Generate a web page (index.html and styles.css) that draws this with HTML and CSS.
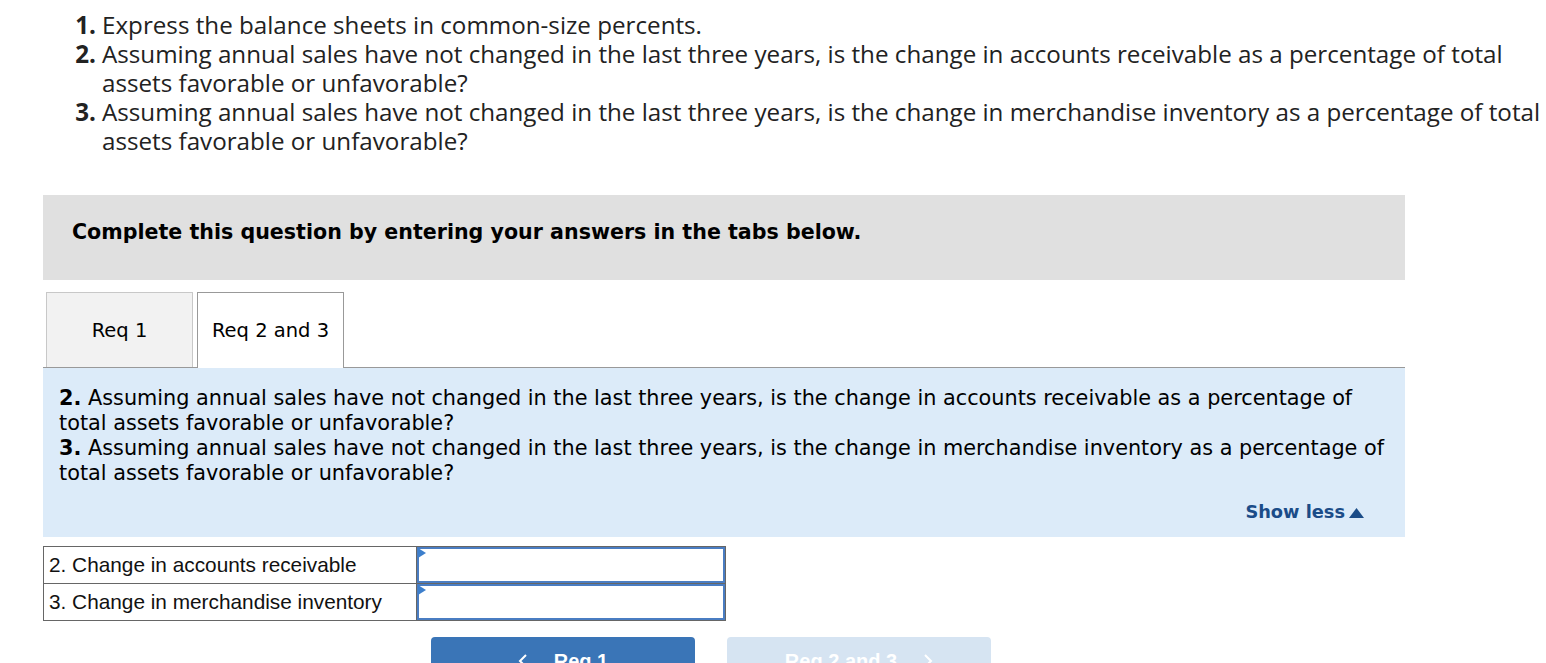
FILE: index.html
```html
<!DOCTYPE html>
<html>
<head>
<meta charset="utf-8">
<link rel="stylesheet" href="styles.css">
</head>
<body>
<div class="page">
  <ol class="reqs">
    <li><span class="num">1.</span><span class="txt">Express the balance sheets in common-size percents.</span></li>
    <li><span class="num">2.</span><span class="txt">Assuming annual sales have not changed in the last three years, is the change in accounts receivable as a percentage of total<br>assets favorable or unfavorable?</span></li>
    <li><span class="num">3.</span><span class="txt">Assuming annual sales have not changed in the last three years, is the change in merchandise inventory as a percentage of total<br>assets favorable or unfavorable?</span></li>
  </ol>

  <div class="instr">Complete this question by entering your answers in the tabs below.</div>

  <div class="tabs">
    <div class="tab">Req 1</div>
    <div class="tab active">Req 2 and 3</div>
  </div>

  <div class="panel">
    <p><b>2.</b> Assuming annual sales have not changed in the last three years, is the change in accounts receivable as a percentage of<br>total assets favorable or unfavorable?<br><b>3.</b> Assuming annual sales have not changed in the last three years, is the change in merchandise inventory as a percentage of<br>total assets favorable or unfavorable?</p>
    <div class="showless"><span>Show less</span><svg class="tri" width="15" height="10" viewBox="0 0 15 10"><polygon points="7.5,0 15,10 0,10" fill="#1b4c88"/></svg></div>
  </div>

  <div class="answers">
    <div class="cell lbl">2. Change in accounts receivable</div>
    <div class="cell inp"><div class="box"><span class="flag"></span></div></div>
    <div class="cell lbl">3. Change in merchandise inventory</div>
    <div class="cell inp"><div class="box"><span class="flag"></span></div></div>
  </div>

  <div class="nav">
    <div class="btn prev"><svg class="chev" width="10" height="16" viewBox="0 0 10 16"><polyline points="8,2 2,8 8,14" fill="none" stroke="#fff" stroke-width="2"/></svg><span>Req 1</span></div>
    <div class="btn next"><span>Req 2 and 3</span><svg class="chev" width="10" height="16" viewBox="0 0 10 16"><polyline points="2,2 8,8 2,14" fill="none" stroke="#fff" stroke-width="2"/></svg></div>
  </div>
</div>
</body>
</html>
```
FILE: styles.css
```css
html, body { margin: 0; padding: 0; background: #fff; }
body { overflow: hidden; }
.page { padding-left: 43px; width: 1362px; }

.reqs {
  list-style: none;
  margin: 10px 0 0 0;
  padding: 0;
  width: 1500px;
  font-family: "Open Sans", "Lato", sans-serif;
  font-size: 24.2px;
  line-height: 29px;
  color: #222;
}
.reqs li { display: flex; gap: 6px; }
.reqs .num { width: 53px; text-align: right; font-weight: 700; flex: none; }
.reqs .txt { flex: 1; white-space: nowrap; }

.instr {
  margin-top: 40px;
  background: #e0e0e0;
  height: 85px;
  box-sizing: border-box;
  padding: 25px 0 0 29px;
  font-family: "DejaVu Sans", Verdana, sans-serif;
  font-weight: 700;
  font-size: 20.6px;
  color: #000;
}

.tabs {
  margin-top: 12px;
  display: flex;
  gap: 4px;
  padding-left: 3px;
  border-bottom: 1px solid #999;
  height: 75px;
}
.tab {
  width: 147px;
  height: 75px;
  box-sizing: border-box;
  border: 1px solid #c8c8c8;
  border-bottom: none;
  background: #f2f2f2;
  display: flex;
  align-items: center;
  justify-content: center;
  font-family: "DejaVu Sans", Verdana, sans-serif;
  font-size: 19.5px;
  color: #000;
}
.tab.active {
  background: #fff;
  border-color: #999;
  height: 76px;
  margin-bottom: -1px;
}

.panel {
  background: #dcebf9;
  padding: 18px 41px 15px 16px;
  font-family: "DejaVu Sans", Verdana, sans-serif;
  font-size: 20.8px;
  line-height: 25px;
  color: #000;
}
.panel p { margin: 0; white-space: nowrap; }
.showless {
  margin-top: 16px;
  display: flex;
  justify-content: flex-end;
  align-items: center;
  gap: 4px;
  font-weight: 700;
  font-size: 17.8px;
  line-height: 20px;
  color: #1b4c88;
}
.showless .tri { display: block; margin-top: 1px; }

.answers {
  margin-top: 9px;
  display: grid;
  grid-template-columns: 373px 309px;
  width: max-content;
  border-top: 1px solid #666;
  border-left: 1px solid #666;
  font-family: "Liberation Sans", Arial, sans-serif;
  font-size: 20.8px;
  color: #111;
}
.cell {
  height: 37px;
  box-sizing: border-box;
  border-right: 1px solid #666;
  border-bottom: 1px solid #666;
}
.lbl { padding-left: 5px; display: flex; align-items: center; }
.box {
  height: 36px;
  border: 2px solid #4a7dc2;
  box-sizing: border-box;
  position: relative;
}
.flag {
  position: absolute;
  left: -1px;
  top: -1px;
  width: 0; height: 0;
  border-top: 5px solid transparent;
  border-bottom: 5px solid transparent;
  border-left: 8px solid #3d7fcc;
}

.nav {
  margin-top: 16px;
  margin-left: 388px;
  display: flex;
  gap: 32px;
}
.btn {
  width: 264px;
  height: 44px;
  border-radius: 4px;
  font-family: "Liberation Sans", Arial, sans-serif;
  font-weight: 700;
  font-size: 20px;
  color: #fff;
  display: flex;
  justify-content: center;
  align-items: flex-start;
  gap: 26px;
  padding-top: 13px;
  box-sizing: border-box;
}
.btn.prev { background: #3a75b7; }
.btn.next { background: #d6e4f2; }
.chev { display: block; margin-top: 3px; }
```
